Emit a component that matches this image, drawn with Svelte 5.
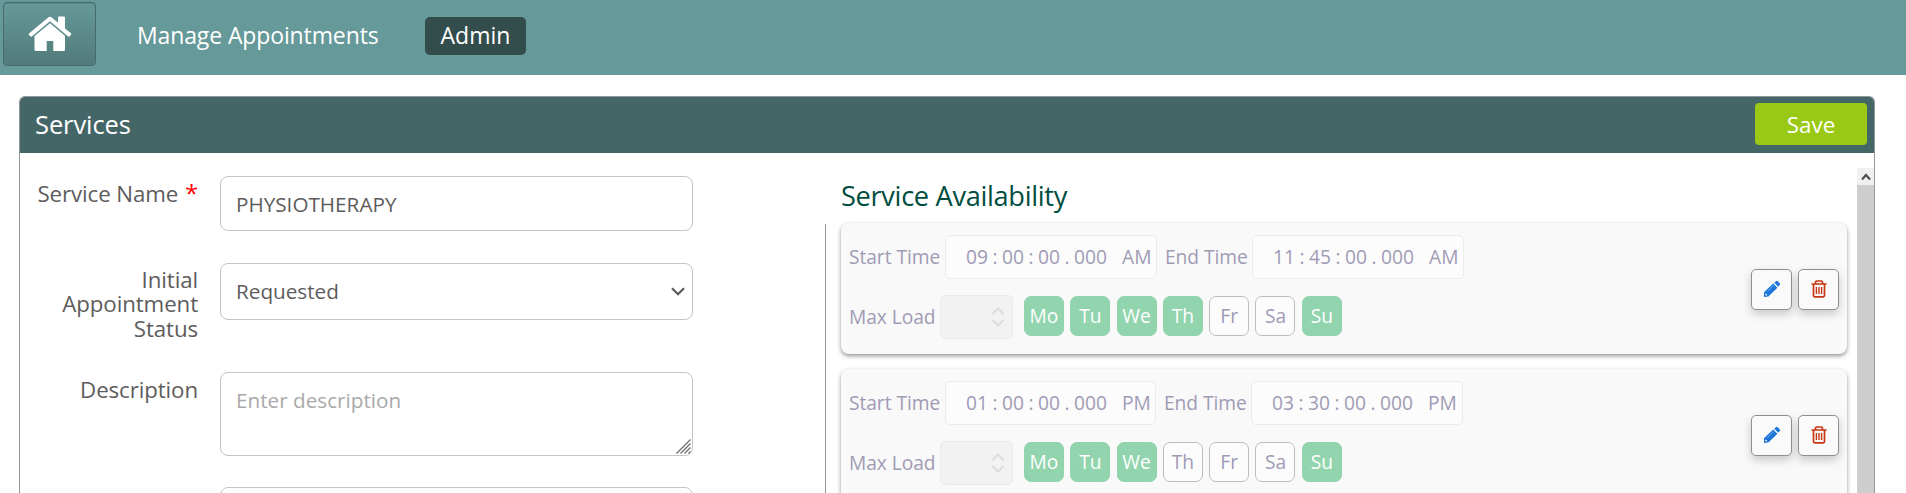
<script>
  const dayNames = ['Mo', 'Tu', 'We', 'Th', 'Fr', 'Sa', 'Su'];
  const slots = [
    { start: ['09', '00', '00', '000', 'AM'], end: ['11', '45', '00', '000', 'AM'], days: ['Mo', 'Tu', 'We', 'Th', 'Su'], width: 212 },
    { start: ['01', '00', '00', '000', 'PM'], end: ['03', '30', '00', '000', 'PM'], days: ['Mo', 'Tu', 'We', 'Su'], width: 211 }
  ];
</script>

{#snippet time(parts, width)}
  <div class="time" style="width:{width}px">
    <span class="two">{parts[0]}</span><span class="sep">:</span><span class="two">{parts[1]}</span><span class="sep">:</span><span class="two">{parts[2]}</span><span class="sep">.</span><span class="three">{parts[3]}</span><span>{parts[4]}</span>
  </div>
{/snippet}

<div class="page">
  <header>
    <button class="home" aria-label="Home">
      <svg width="44" height="36" viewBox="0 0 44 36" fill="#fff">
        <path d="M1 17.500 20.200 1.500Q22 0 23.800 1.500L30 6.700V1.500Q30 .5 31 .5H36Q37 .5 37 1.500V12.600L43 17.300Q43.700 18 43 18.800L41.700 20.300Q41 21 40.200 20.400L22 5.200 3.800 20.400Q3 21 2.300 20.300L1 18.900Q.3 18.200 1 17.500Z" />
        <path d="M22 7.200 37 19.800V33.500Q37 35 35.500 35H25.300V25H18.700V35H8Q6.500 35 6.500 33.500V20Z" />
      </svg>
    </button>
    <nav>
      <span class="manage">Manage Appointments</span>
      <span class="admin">Admin</span>
    </nav>
  </header>

  <section class="panel">
    <div class="bar">
      <h1>Services</h1>
      <button class="save">Save</button>
    </div>
    <div class="body">
      <form>
        <div class="row r1">
          <label for="name">Service Name <b>*</b></label>
          <div class="box" id="name">PHYSIOTHERAPY</div>
        </div>
        <div class="row r2">
          <label for="status">Initial Appointment Status</label>
          <div class="box select" id="status">
            <span>Requested</span>
            <svg width="14" height="9" viewBox="0 0 14 9"><path d="M1 1.200 7 7.200 13 1.200" fill="none" stroke="#5e5c5c" stroke-width="2.300" /></svg>
          </div>
        </div>
        <div class="row r3">
          <label for="desc">Description</label>
          <div class="box area" id="desc">
            <span>Enter description</span>
            <svg width="15" height="15" viewBox="0 0 15 15"><path d="M.5 14.500 14.500 .5M4.500 14.500 14.500 4.500M8.500 14.500 14.500 8.500M12.500 14.500 14.500 12.500" stroke="#6b6b6b" stroke-width="1.200" /></svg>
          </div>
        </div>
        <div class="row r4"><div class="box"></div></div>
      </form>

      <div class="divider"></div>

      <div class="availability">
        <h2>Service Availability</h2>
        {#each slots as slot}
          <article>
            <div class="fields">
              <div class="line">
                <span class="l-start">Start Time</span>
                {@render time(slot.start, slot.width)}
                <span class="l-end">End Time</span>
                {@render time(slot.end, 212)}
              </div>
              <div class="line second">
                <span class="l-max">Max Load</span>
                <div class="load">
                  <svg width="12" height="20" viewBox="0 0 12 20"><path d="M1 6.500 6 1.500 11 6.500M1 13.500 6 18.500 11 13.500" fill="none" stroke="#dcdcdc" stroke-width="2" stroke-linecap="round" stroke-linejoin="round" /></svg>
                </div>
                <div class="days">
                  {#each dayNames as day}
                    <span class:on={slot.days.includes(day)}>{day}</span>
                  {/each}
                </div>
              </div>
            </div>
            <div class="actions">
              <button aria-label="Edit">
                <svg width="18" height="18" viewBox="0 0 18 18">
                  <path fill="#1c76d8" d="M1 12.300 10.200 3.600 14.400 7.700 5.400 16.500 1 17ZM11.200 2.700 12.900 1.200Q13.700 .5 14.600 1.200L16.700 3.300Q17.500 4.200 16.700 5L15.300 6.700Z" />
                  <path d="M4.500 11.400 10.500 5.700" stroke="#7db5f2" stroke-width=".8" /><path d="M2.300 13.800 3.800 15.300" stroke="#fff" stroke-width="1.200" />
                </svg>
              </button>
              <button aria-label="Delete">
                <svg width="16" height="18" viewBox="0 0 16 18" fill="none" stroke="#c83512">
                  <path d="M.5 4H15.500M4.500 4V2.300Q4.500 1 5.800 1H10.200Q11.500 1 11.500 2.300V4M2.500 4V15.500Q2.500 16.800 3.800 16.800H12.200Q13.500 16.800 13.500 15.500V4" stroke-width="1.700" />
                  <path d="M5.400 7V14M8 7V14M10.600 7V14" stroke-width="1.400" />
                </svg>
              </button>
            </div>
          </article>
        {/each}
      </div>

      <div class="scroll">
        <div class="up"><svg width="10" height="8" viewBox="0 0 10 8"><path d="M1 6.500 5 2 9 6.500" fill="none" stroke="#505050" stroke-width="2.200" /></svg></div>
        <div class="thumb"></div>
      </div>
    </div>
  </section>
</div>

<style>
  :global(body) { margin: 0; background: #fff; }
  .page, .page * { box-sizing: border-box; }
  .page { height: 100vh; overflow: hidden; display: flex; flex-direction: column; font-family: "Open Sans", "Noto Sans", sans-serif; color: #5e5c5c; }
  button { font: inherit; padding: 0; margin: 0; display: flex; align-items: center; justify-content: center; }
  svg { display: block; flex: none; }

  header { height: 75px; flex: none; background: #669999; display: flex; align-items: flex-start; padding: 2px 3px; }
  .home { width: 93px; height: 64px; border: 1px solid #476b6b; border-radius: 4px; background: linear-gradient(#669999, #527a7a); box-shadow: inset 0 1px 0 #5b8989; }
  .home svg { margin: -1px 0 0 0; }
  nav { display: flex; align-items: center; margin: 15px 0 0 41px; height: 38px; font-size: 23px; color: #fff; white-space: nowrap; }
  .manage { width: 288px; letter-spacing: -.12px; line-height: 36px; padding-bottom: 2px; }
  .admin { width: 101px; height: 38px; line-height: 36px; text-align: center; background: #334d4d; border-radius: 5px; }

  .panel { flex: 1; min-height: 0; margin: 21px 31px 0 19px; border: 1px solid #949797; border-bottom: 0; border-radius: 6px 6px 0 0; display: flex; flex-direction: column; overflow: hidden; }
  .bar { height: 56px; flex: none; background: #446666; display: flex; justify-content: space-between; padding: 6px 7px 0 15px; }
  h1 { margin: 0; font-size: 25.5px; line-height: 43px; font-weight: 400; color: #fff; letter-spacing: -.1px; }
  .save { width: 112px; height: 42px; border: 0; border-radius: 4px; background: #9ac915; color: #fff; font-size: 22.400px; }

  .body { flex: 1; min-height: 0; display: flex; padding-top: 15px; overflow: hidden; }
  form { width: 805px; flex: none; padding-top: 8px; display: flex; flex-direction: column; }
  .row { display: flex; flex: none; align-items: flex-start; }
  .r1 { height: 87px; } .r2 { height: 109px; } .r3 { height: 115px; }
  label { width: 178px; margin-right: 22px; padding-top: 6px; text-align: right; font-size: 22.300px; line-height: 24.400px; padding-left: 10px; letter-spacing: -.1px; }
  .r1 label { padding-top: 5px; white-space: nowrap; }
  .r2 label { padding-top: 5px; padding-left: 30px; }
  label b { color: #f00; font-weight: 500; font-size: 24px; line-height: 1; margin-left: 1px; }
  .box { width: 473px; height: 55px; border: 1px solid #c4c4ca; border-radius: 8px; padding: 0 16px 0 15px; font-size: 20.700px; line-height: 55px; background: #fff; }
  .select { height: 57px; display: flex; justify-content: space-between; align-items: center; padding-right: 7px; }
  .area { height: 84px; color: #a9a9a9; line-height: 28px; padding: 13px 1px 1px 15px; display: flex; justify-content: space-between; }
  .area svg { align-self: flex-end; }
  .r4 { padding-left: 200px; }

  .divider { width: 1px; flex: none; background: #949494; margin-top: 56px; }
  .availability { margin-left: 15px; width: 1006px; flex: none; display: flex; flex-direction: column; }
  h2 { margin: 0; height: 55px; flex: none; font-size: 27.200px; letter-spacing: -.32px; font-weight: 400; line-height: 56px; color: #004d40; }
  article { height: 131px; flex: none; margin-bottom: 15px; border-radius: 8px; background: #f9f9f9; box-shadow: 0 2px 4px rgba(0,0,0,.42); display: flex; justify-content: space-between; align-items: center; padding: 0 8px; color: #9f9bb5; font-size: 19.200px; white-space: nowrap; }
  .fields { align-self: flex-start; padding-top: 12px; }
  .line { display: flex; align-items: center; height: 44px; }
  .second { margin-top: 16px; }
  .l-start { width: 96px; } .l-end { width: 87px; margin-left: 8px; } .l-max { width: 91px; }
  .l-start, .l-end, .l-max { letter-spacing: -.05px; padding-bottom: 2px; }
  .time { height: 44px; display: flex; align-items: center; border: 1px solid #ebebeb; border-radius: 5px; background: #fcfcfc; padding: 0 0 2px 20px; }
  .two { width: 22px; text-align: center; } .sep { width: 14px; text-align: center; } .three { width: 34px; margin-right: 14px; }
  .load { width: 73px; height: 44px; border: 1px solid #ebebeb; border-radius: 5px; background: #f2f2f2; display: flex; justify-content: flex-end; align-items: center; padding-right: 8px; }
  .days { display: flex; gap: 6.300px; margin-left: 11px; margin-top: -2px; }
  .days span { width: 40px; height: 40px; border: 1px solid #bdbdbd; border-radius: 7px; background: #fcfcfc; text-align: center; line-height: 38px; }
  .days .on { background: #91d4ae; border-color: #91d4ae; color: #fff; }
  .actions { display: flex; gap: 6px; margin-top: 1px; }
  .actions button { width: 41px; height: 41px; border: 1px solid #8f8f8f; border-radius: 5px; background: #fafafa; box-shadow: 0 4px 10px rgba(0,0,0,.2); }

  .scroll { width: 17px; flex: none; margin-left: auto; display: flex; flex-direction: column; }
  .up { height: 17px; background: #f0f0f0; display: flex; align-items: center; justify-content: center; }
  .thumb { flex: 1; background: #cdcdcd; }
</style>
